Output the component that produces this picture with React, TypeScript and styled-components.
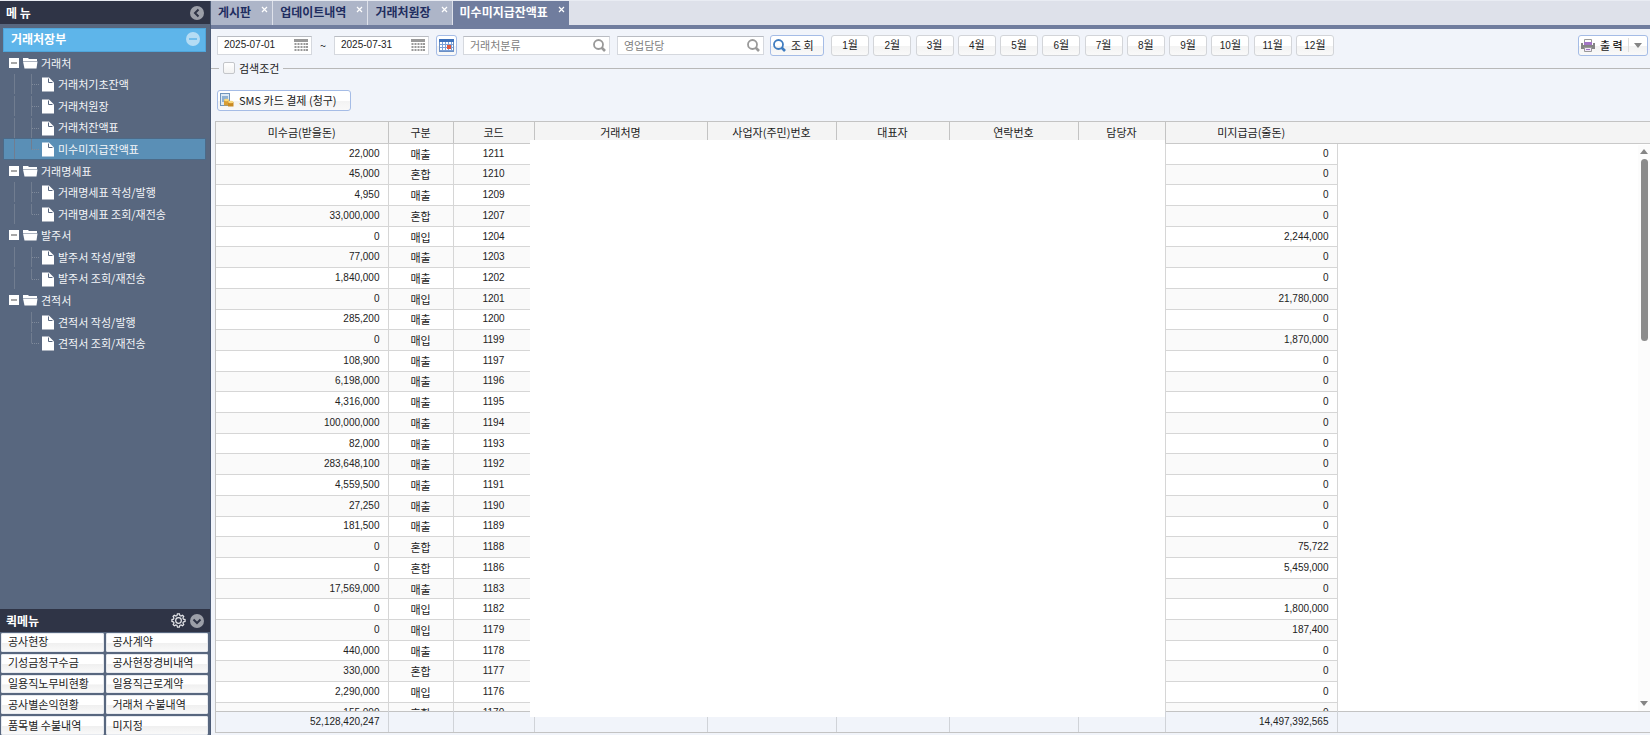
import React from 'react';
import styled, { createGlobalStyle, css } from 'styled-components';

const korean = `'Noto Sans CJK KR', sans-serif`;
const digits = `'Liberation Sans', 'Noto Sans CJK KR', sans-serif`;

const numeric = css`
  font-family: ${digits};
  font-size: 10px;
`;

const Global = createGlobalStyle`
  * { box-sizing: border-box; }
  body { margin: 0; background: #f1f4fa; font-family: ${korean}; font-size: 11px; line-height: 16px; color: #222; }
  button, input { font: inherit; color: inherit; }
  ul { list-style: none; margin: 0; padding: 0; }
  a { color: inherit; text-decoration: none; }
`;

const Page = styled.div`
  display: grid;
  grid-template-columns: 211px minmax(0, 1fr);
  height: 100vh;
  overflow: hidden;
  border-top: 1px solid #e9ecf3;
`;

/* ---------- side menu ---------- */
const Sidebar = styled.aside`
  display: flex;
  flex-direction: column;
  min-height: 0;
  background: #58677f;
  border-right: 1px solid #4b5a75;
`;

const PanelHeader = styled.header`
  display: flex;
  flex: none;
  align-items: center;
  gap: 4px;
  height: 23px;
  padding: 0 6px;
  background: #2f3446;
  color: #fff;
`;

const PanelTitle = styled.h2`
  flex: 1;
  margin: 0;
  font-size: 12px;
  font-weight: 700;
`;

const PlainButton = styled.button`
  display: flex;
  padding: 0;
  border: 0;
  background: none;
`;

const SectionButton = styled.button`
  display: flex;
  flex: none;
  align-items: center;
  justify-content: space-between;
  height: 24px;
  margin: 4px 4px 0 3px;
  padding: 0 5px 2px 7px;
  border: 1px solid #4fa5da;
  background: #5eb5ea;
  color: #fff;
  font-size: 12px;
  font-weight: 700;
`;

const Tree = styled.ul`
  display: grid;
  flex: none;
  grid-auto-rows: 1fr;
  height: 302px;
  margin: 0 4px 0 3px;
`;

const TreeItem = styled.li<{ $selected?: boolean }>`
  min-height: 0;
  border: 1px solid transparent;
  ${p => p.$selected && css`border-color: #4c6a88; background: #5a8fb6;`}
`;

const TreeLink = styled.a`
  display: flex;
  align-items: center;
  height: 100%;
  padding-left: 5px;
  color: #f3f5f8;
`;

const TreeText = styled.span<{ $leaf?: boolean }>`
  padding-left: ${p => (p.$leaf ? 4 : 2)}px;
  white-space: nowrap;
`;

const QuickPanel = styled.section`
  flex: none;
  margin-top: auto;
`;

const QuickGrid = styled.div`
  display: grid;
  grid-template-columns: 1fr 1fr;
  grid-auto-rows: 1fr;
  gap: 2px;
  height: 103px;
  padding: 1px 2px 0 1px;
`;

const QuickButton = styled.button`
  min-height: 0;
  padding: 0 0 2px 7px;
  border: 0;
  border-radius: 2px;
  background: linear-gradient(#fff 50%, #f0f0f0 55%, #fafafa);
  box-shadow: inset 0 0 0 1px #e6e9ee;
  line-height: 16px;
  text-align: left;
  white-space: nowrap;
`;

/* ---------- work area ---------- */
const Main = styled.main`
  display: flex;
  flex-direction: column;
  min-width: 0;
  min-height: 0;
`;

const TabBar = styled.nav`
  display: flex;
  flex: none;
  gap: 1px;
  height: 28px;
  border-bottom: 4px solid #707d9e;
  background: #dee1ea;
`;

const Tab = styled.div<{ $active?: boolean }>`
  display: flex;
  align-items: flex-start;
  gap: 10px;
  padding: 3px 4px 0 7px;
  background: ${p => (p.$active ? '#707d9e' : '#adb5c8')};
  color: ${p => (p.$active ? '#fff' : '#1f2d60')};
  font-size: 12px;
  font-weight: 700;
  white-space: nowrap;
`;

const TabClose = styled.button`
  display: flex;
  padding: 2px 0 0;
  border: 0;
  background: none;
  color: #fff;
`;

const Toolbar = styled.form`
  display: flex;
  flex: none;
  align-items: center;
  height: 32px;
  padding: 0 2px 0 6px;
`;

const FieldBox = styled.label<{ $width: number }>`
  display: flex;
  flex: none;
  align-items: center;
  width: ${p => p.$width}px;
  height: 19px;
  padding: 0 3px 0 6px;
  border: 1px solid #d5d8de;
  border-top-color: #b9bcc2;
  background: #fff;
`;

const FieldInput = styled.input<{ $numeric?: boolean }>`
  flex: 1;
  width: 0;
  height: 16px;
  padding: 0;
  border: 0;
  outline: 0;
  background: none;
  ${p => p.$numeric && numeric}
  &::placeholder { color: #808080; opacity: 1; }
`;

const Tilde = styled.span`
  width: 22px;
  text-align: center;
`;

const PushButton = styled.button<{ $accent?: boolean; $width: number }>`
  display: flex;
  flex: none;
  align-items: center;
  justify-content: ${p => (p.$accent ? 'flex-start' : 'center')};
  gap: 5px;
  width: ${p => p.$width}px;
  height: 21px;
  padding: 0 2px;
  border: 1px solid ${p => (p.$accent ? '#a5bce6' : '#d3d5d9')};
  border-radius: 3px;
  background: linear-gradient(#fff 50%, #f3f3f3 55%, #f9f9f9);
  line-height: 16px;
  white-space: nowrap;
`;

const Group = styled.div<{ $left: number }>`
  display: flex;
  flex: none;
  margin-left: ${p => p.$left}px;
`;

const Months = styled(Group)`
  justify-content: space-between;
  width: 503px;
`;

const PrintGroup = styled.div`
  margin-left: auto;
  font-weight: 500;
`;

const Caret = styled.span`
  display: flex;
  align-items: center;
  height: 14px;
  padding-left: 5px;
  border-left: 1px solid #ddd;
`;

const SearchLegend = styled.div`
  display: flex;
  flex: none;
  align-items: center;
  gap: 4px;
  height: 14px;
  &::before, &::after { content: ''; height: 1px; background: #b8b8b8; }
  &::before { width: 8px; }
  &::after { flex: 1; }
`;

const CheckLabel = styled.label`
  display: flex;
  align-items: center;
  gap: 4px;
`;

const Check = styled.input`
  appearance: none;
  width: 12px;
  height: 12px;
  margin: 0;
  border: 1px solid #c4c6ca;
  border-radius: 2px;
  background: linear-gradient(#fff, #f2f2f2);
`;

const ActionRow = styled.div`
  display: flex;
  flex: none;
  align-items: center;
  height: 46px;
  padding: 4px 6px 0;
`;

/* ---------- ledger grid ---------- */
const Ledger = styled.section`
  position: relative;
  display: flex;
  flex: 1;
  flex-direction: column;
  min-height: 0;
  margin: 0 0 2px 4px;
  border: 1px solid #c3c3c3;
  border-right: 0;
`;

const cellText = css`
  padding: 0 8px;
  line-height: 16px;
  text-align: center;
  white-space: nowrap;
`;

const HeadTable = styled.table`
  flex: none;
  width: 100%;
  height: 22px;
  table-layout: fixed;
  border-collapse: collapse;
  background: #f4f4f4;
  th { ${cellText} padding-bottom: 2px; font-weight: 400; border-right: 1px solid #c3c3c3; border-bottom: 1px solid #c9c9c9; }
  th:nth-last-child(-n + 2) { border-right: 0; }
`;

const Body = styled.div`
  display: flex;
  flex: 1;
  align-items: flex-start;
  min-height: 0;
  overflow: hidden;
  background: #fff;
`;

const BodyTable = styled.table`
  flex: 1;
  width: 0;
  height: 580px;
  table-layout: fixed;
  border-collapse: collapse;
  td { ${cellText} border-right: 1px solid #d6d6d6; border-bottom: 1px solid #d6d6d6; }
  tr:nth-child(even) td { background: #fafafa; }
  tr td:last-child { border: 0; background: #fff; }
  td:nth-child(1), td:nth-child(9) { ${numeric} text-align: right; }
  td:nth-child(3) { ${numeric} }
`;

const TotalTable = styled.table`
  flex: none;
  width: 100%;
  height: 21px;
  table-layout: fixed;
  border-collapse: collapse;
  background: #f1f4fa;
  td { ${cellText} ${numeric} text-align: right; border-top: 1px solid #c3c3c3; border-right: 1px solid #d0d3d8; }
  td:last-child { border-right: 0; }
`;

const Redaction = styled.div`
  position: absolute;
  top: 18px;
  bottom: 15px;
  left: 314px;
  width: 635px;
  background: #fff;
`;

const ScrollRail = styled.div`
  display: flex;
  position: absolute;
  top: 23px;
  right: 0;
  bottom: 21px;
  flex-direction: column;
  align-items: center;
  width: 12px;
  padding: 4px 0 5px;
  background: #fcfcfc;
`;

const Thumb = styled.div`
  width: 7px;
  height: 182px;
  margin: 5px 0 auto;
  border-radius: 4px;
  background: #8b8b8b;
`;

/* ---------- drawings ---------- */
const RoundIcon = ({ kind }: { kind: 'left' | 'down' | 'minus' }) => (
  <svg width="14" height="14" viewBox="0 0 14 14" fill="none" aria-hidden>
    <circle cx="7" cy="7" r="7" fill={kind === 'minus' ? '#b5dcf4' : '#9c9fa8'} />
    {kind === 'left' && <path d="M8.500 3.500 5 7l3.500 3.500" stroke="#2f3446" strokeWidth="2" />}
    {kind === 'down' && <path d="M3.500 5.500 7 9l3.500-3.500" stroke="#2f3446" strokeWidth="2" />}
    {kind === 'minus' && <path d="M3 7h8" stroke="#5eb5ea" strokeWidth="1.500" />}
  </svg>
);

const Gear = () => (
  <svg width="15" height="15" viewBox="0 0 16 16" fill="none" stroke="#e4e5e9" strokeWidth="1.300" aria-hidden>
    <path d="m6.800 1-.4 1.700-1.300.6-1.600-.9-1.300 1.300.9 1.600-.5 1.300L1 7v2l1.700.5.500 1.200-.9 1.600 1.300 1.300 1.600-.9 1.200.5.5 1.800h2l.5-1.800 1.300-.5 1.600.9 1.300-1.300-.9-1.600.5-1.200L15 9V7l-1.700-.4-.6-1.300.9-1.600-1.300-1.300-1.600.9-1.200-.6L9 1z" />
    <circle cx="8" cy="8" r="3" />
  </svg>
);

const FolderIcon = () => (
  <svg width="30" height="20" viewBox="0 0 30 20" fill="#fff" aria-hidden>
    <path d="M0 5h10v10H0z" />
    <path d="M2 10h6" stroke="#8a8a8a" strokeWidth="1.500" />
    <path d="M14 5h5l1 1h8v2H14z" />
    <path d="M14 8.500h14.500L27.500 15.500h-12z" />
  </svg>
);

const LeafIcon = ({ last, end }: { last?: boolean; end?: boolean }) => (
  <svg width="45" height="20" viewBox="0 0 45 20" fill="none" aria-hidden>
    {!end && <path d="M5.500 0v20" stroke="#717d90" />}
    <path d={last ? 'M22.500 0v10.500' : 'M22.500 0v20'} stroke="#717d90" />
    <path d="M23 10.500h7" stroke="#7f8a9b" strokeDasharray="1 1" />
    <path d="M33 3.500h7l5 5v9H33z" fill="#fff" />
    <path d="M39.500 4.500v4h4" stroke="#58677f" />
  </svg>
);

const Calendar = () => (
  <svg width="14" height="14" viewBox="0 0 14 14" aria-hidden>
    <path d="M0 1h14v3H0z" fill="#999" />
    <path d="M1.500 5v9M4.500 5v9M7.500 5v9M10.500 5v9M13 5v9" stroke="#999" strokeWidth="2" strokeDasharray="2 1" />
  </svg>
);

const ColorCalendar = () => (
  <svg width="15" height="14" viewBox="0 0 15 14" aria-hidden>
    <rect x=".5" y="1.500" width="14" height="12" fill="#fff" stroke="#6b8fc4" />
    <path d="M0 1h15v3H0z" fill="#3e72bd" />
    <path d="M3.500 4v9M6.500 4v9M9.500 4v9M12.500 4v9M1 6.500h13M1 9.500h13M1 12.500h13" stroke="#7da2d8" />
    <path d="M8 7h4v4H8z" fill="#e0563c" />
  </svg>
);

const Magnifier = ({ color }: { color: string }) => (
  <svg width="13" height="13" viewBox="0 0 13 13" fill="none" stroke={color} aria-hidden>
    <circle cx="5.500" cy="5.500" r="4.500" strokeWidth="1.800" />
    <path d="m8.500 8.500 3.500 3.500" strokeWidth="2.600" />
  </svg>
);

const CardIcon = () => (
  <svg width="14" height="14" viewBox="0 0 14 14" aria-hidden>
    <rect x=".5" y=".5" width="9" height="12" fill="#dce9f5" stroke="#7196bd" />
    <path d="M2 3h6v6H2z" fill="#8fb1d2" />
    <path d="M4 7h5v5.500H4z" fill="#d89e35" />
    <path d="M8 9h5.500v4.500H8z" fill="#c98a22" />
    <ellipse cx="6.500" cy="7" rx="2.500" ry="1.200" fill="#f8d77c" />
    <ellipse cx="10.800" cy="9" rx="2.700" ry="1.200" fill="#f8d77c" />
  </svg>
);

const Printer = () => (
  <svg width="14" height="13" viewBox="0 0 14 13" aria-hidden>
    <path d="M3.500.5h7V5h-7z" fill="#fff" stroke="#999" />
    <path d="M0 4h2v2h10V4h2v6H0z" fill="#858585" />
    <path d="M3 3h8v3H3z" fill="#a274c4" />
    <path d="M3.500 8.500h7v4h-7z" fill="#f2e8fa" stroke="#999" />
    <path d="M5 10h4v1H5z" fill="#a274c4" />
  </svg>
);

const Triangle = ({ up }: { up?: boolean }) => (
  <svg width="8" height="5" viewBox="0 0 8 5" fill="#858585" aria-hidden>
    <path d={up ? 'M0 5 4 0l4 5z' : 'M0 0h8L4 5z'} />
  </svg>
);

const Cross = () => (
  <svg width="7" height="7" viewBox="0 0 7 7" stroke="#fff" strokeWidth="1.200" aria-hidden>
    <path d="m1 1 5 5M6 1 1 6" />
  </svg>
);

/* ---------- data ---------- */
type Node = { text: string; leaf?: boolean; last?: boolean; end?: boolean; selected?: boolean };
const tree: Node[] = [
  { text: '거래처' },
  { text: '거래처기초잔액', leaf: true },
  { text: '거래처원장', leaf: true },
  { text: '거래처잔액표', leaf: true },
  { text: '미수미지급잔액표', leaf: true, last: true, selected: true },
  { text: '거래명세표' },
  { text: '거래명세표 작성/발행', leaf: true },
  { text: '거래명세표 조회/재전송', leaf: true, last: true },
  { text: '발주서' },
  { text: '발주서 작성/발행', leaf: true },
  { text: '발주서 조회/재전송', leaf: true, last: true },
  { text: '견적서' },
  { text: '견적서 작성/발행', leaf: true, end: true },
  { text: '견적서 조회/재전송', leaf: true, last: true, end: true },
];

const quick = ['공사현장', '공사계약', '기성금청구수금', '공사현장경비내역', '일용직노무비현황', '일용직근로계약', '공사별손익현황', '거래처 수불내역', '품목별 수불내역', '미지정'];
const tabs = ['게시판', '업데이트내역', '거래처원장', '미수미지급잔액표'];
const heads = ['미수금(받을돈)', '구분', '코드', '거래처명', '사업자(주민)번호', '대표자', '연락번호', '담당자', '미지급금(줄돈)', ''];
const widths = [172, 65, 81, 173, 129, 113, 129, 87, 172];

const rows: [string, string, string, string][] = [
  ['22,000', '매출', '1211', '0'],
  ['45,000', '혼합', '1210', '0'],
  ['4,950', '매출', '1209', '0'],
  ['33,000,000', '혼합', '1207', '0'],
  ['0', '매입', '1204', '2,244,000'],
  ['77,000', '매출', '1203', '0'],
  ['1,840,000', '매출', '1202', '0'],
  ['0', '매입', '1201', '21,780,000'],
  ['285,200', '매출', '1200', '0'],
  ['0', '매입', '1199', '1,870,000'],
  ['108,900', '매출', '1197', '0'],
  ['6,198,000', '매출', '1196', '0'],
  ['4,316,000', '매출', '1195', '0'],
  ['100,000,000', '매출', '1194', '0'],
  ['82,000', '매출', '1193', '0'],
  ['283,648,100', '매출', '1192', '0'],
  ['4,559,500', '매출', '1191', '0'],
  ['27,250', '매출', '1190', '0'],
  ['181,500', '매출', '1189', '0'],
  ['0', '혼합', '1188', '75,722'],
  ['0', '혼합', '1186', '5,459,000'],
  ['17,569,000', '매출', '1183', '0'],
  ['0', '매입', '1182', '1,800,000'],
  ['0', '매입', '1179', '187,400'],
  ['440,000', '매출', '1178', '0'],
  ['330,000', '혼합', '1177', '0'],
  ['2,290,000', '매입', '1176', '0'],
  ['155,000', '혼합', '1170', '0'],
];

const Columns = () => (
  <colgroup>
    {widths.map((w, i) => <col key={i} width={w} />)}
    <col />
  </colgroup>
);

const MonthNumber = styled.span`
  ${numeric}
`;

export default function App() {
  return (
    <Page>
      <Global />
      <Sidebar>
        <PanelHeader>
          <PanelTitle>메 뉴</PanelTitle>
          <PlainButton aria-label="메뉴 접기"><RoundIcon kind="left" /></PlainButton>
        </PanelHeader>
        <SectionButton>거래처장부<RoundIcon kind="minus" /></SectionButton>
        <Tree>
          {tree.map(n => (
            <TreeItem key={n.text} $selected={n.selected}>
              <TreeLink href="#">
                {n.leaf ? <LeafIcon last={n.last} end={n.end} /> : <FolderIcon />}
                <TreeText $leaf={n.leaf}>{n.text}</TreeText>
              </TreeLink>
            </TreeItem>
          ))}
        </Tree>
        <QuickPanel>
          <PanelHeader>
            <PanelTitle>퀵메뉴</PanelTitle>
            <PlainButton aria-label="설정"><Gear /></PlainButton>
            <PlainButton aria-label="퀵메뉴 접기"><RoundIcon kind="down" /></PlainButton>
          </PanelHeader>
          <QuickGrid>{quick.map(q => <QuickButton key={q}>{q}</QuickButton>)}</QuickGrid>
        </QuickPanel>
      </Sidebar>

      <Main>
        <TabBar>
          {tabs.map((t, i) => (
            <Tab key={t} $active={i === 3}>
              {t}
              <TabClose aria-label={`${t} 닫기`}><Cross /></TabClose>
            </Tab>
          ))}
        </TabBar>

        <Toolbar onSubmit={e => e.preventDefault()}>
          <FieldBox $width={95}>
            <FieldInput $numeric aria-label="시작일" defaultValue="2025-07-01" />
            <Calendar />
          </FieldBox>
          <Tilde>~</Tilde>
          <FieldBox $width={95}>
            <FieldInput $numeric aria-label="종료일" defaultValue="2025-07-31" />
            <Calendar />
          </FieldBox>
          <Group $left={7}>
            <PushButton $accent $width={21} type="button" aria-label="기간 선택"><ColorCalendar /></PushButton>
          </Group>
          <Group $left={6}>
            <FieldBox $width={147}>
              <FieldInput aria-label="거래처분류" placeholder="거래처분류" />
              <Magnifier color="#999" />
            </FieldBox>
          </Group>
          <Group $left={7}>
            <FieldBox $width={147}>
              <FieldInput aria-label="영업담당" placeholder="영업담당" />
              <Magnifier color="#999" />
            </FieldBox>
          </Group>
          <Group $left={6}>
            <PushButton $accent $width={54}><Magnifier color="#3f7cc0" />조 회</PushButton>
          </Group>
          <Months $left={7}>
            {Array.from({ length: 12 }, (_, i) => (
              <PushButton key={i} type="button" $width={38}><span><MonthNumber>{i + 1}</MonthNumber>월</span></PushButton>
            ))}
          </Months>
          <PrintGroup>
            <PushButton $accent $width={70} type="button"><Printer />출 력<Caret><Triangle /></Caret></PushButton>
          </PrintGroup>
        </Toolbar>

        <SearchLegend>
          <CheckLabel><Check type="checkbox" />검색조건</CheckLabel>
        </SearchLegend>

        <ActionRow>
          <PushButton $accent $width={134}><CardIcon />SMS 카드 결제 (청구)</PushButton>
        </ActionRow>

        <Ledger>
          <HeadTable>
            <Columns />
            <thead><tr>{heads.map((h, i) => <th key={i}>{h}</th>)}</tr></thead>
          </HeadTable>
          <Body>
            <BodyTable>
              <Columns />
              <tbody>
                {rows.map(([due, kind, code, owed]) => (
                  <tr key={code}>
                    <td>{due}</td><td>{kind}</td><td>{code}</td>
                    <td /><td /><td /><td /><td />
                    <td>{owed}</td><td />
                  </tr>
                ))}
              </tbody>
            </BodyTable>
          </Body>
          <TotalTable>
            <Columns />
            <tbody>
              <tr>
                <td>52,128,420,247</td>
                <td /><td /><td /><td /><td /><td /><td />
                <td>14,497,392,565</td><td />
              </tr>
            </tbody>
          </TotalTable>
          <Redaction />
          <ScrollRail><Triangle up /><Thumb /><Triangle /></ScrollRail>
        </Ledger>
      </Main>
    </Page>
  );
}
